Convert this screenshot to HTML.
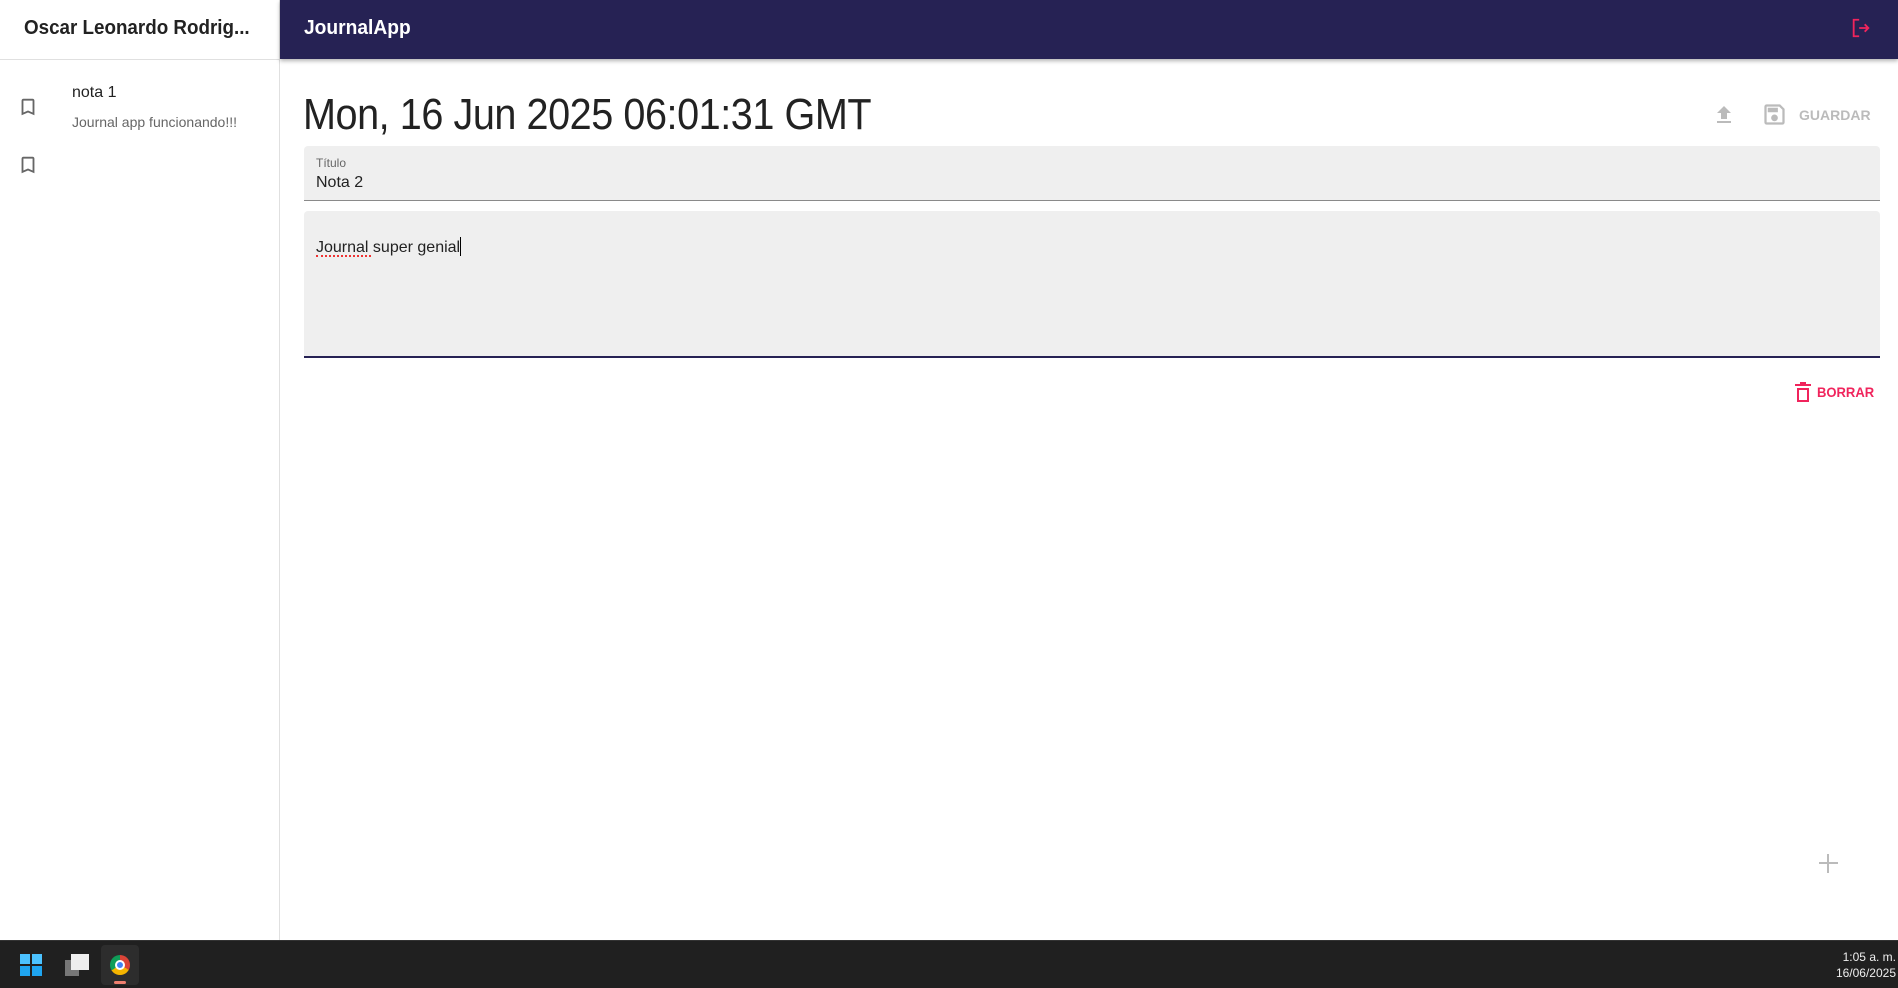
<!DOCTYPE html>
<html><head><meta charset="utf-8"><style>
*{margin:0;padding:0;box-sizing:border-box}
body{width:1898px;height:988px;overflow:hidden;background:#fff;font-family:"Liberation Sans",sans-serif;position:relative}
.abs{position:absolute}
</style></head><body>
<div class="abs" style="left:0;top:0;width:280px;height:940px;border-right:1px solid #e0e0e0;background:#fff"></div>
<div class="abs" style="left:0;top:59px;width:280px;height:1px;background:#e0e0e0"></div>
<div class="abs" style="left:24px;top:17px;font-size:20px;font-weight:bold;color:#222;transform:scaleX(0.94);transform-origin:0 0;white-space:nowrap">Oscar Leonardo Rodrig...</div>
<svg class="abs" style="left:17px;top:95px" width="22" height="24" viewBox="0 0 24 24"><path d="M17 3H7c-1.1 0-2 .9-2 2v16l7-3 7 3V5c0-1.1-.9-2-2-2zm0 15l-5-2.18L7 18V5h10v13z" fill="#666"/></svg>
<svg class="abs" style="left:17px;top:153px" width="22" height="24" viewBox="0 0 24 24"><path d="M17 3H7c-1.1 0-2 .9-2 2v16l7-3 7 3V5c0-1.1-.9-2-2-2zm0 15l-5-2.18L7 18V5h10v13z" fill="#666"/></svg>
<div class="abs" style="left:72px;top:84px;font-size:16px;color:#222">nota 1</div>
<div class="abs" style="left:72px;top:114px;font-size:14px;color:#666">Journal app funcionando!!!</div>
<div class="abs" style="left:280px;top:0;width:1618px;height:59px;background:#262254;box-shadow:0 2px 4px rgba(0,0,0,.3)"></div>
<div class="abs" style="left:304px;top:17px;font-size:20px;font-weight:bold;color:#fff;transform:scaleX(0.96);transform-origin:0 0">JournalApp</div>
<svg class="abs" style="left:1850px;top:17px" width="22" height="22" viewBox="0 0 24 24"><path d="M10 3H4v18h6" fill="none" stroke="#f0245c" stroke-width="2"/><path d="M10 12h10M16 8l4 4-4 4" fill="none" stroke="#f0245c" stroke-width="2"/></svg>
<div class="abs" style="left:303px;top:90px;font-size:44px;font-weight:300;color:#222;letter-spacing:-0.5px;transform:scaleX(0.9);transform-origin:0 0;white-space:nowrap">Mon, 16 Jun 2025 06:01:31 GMT</div>
<svg class="abs" style="left:1712px;top:103px" width="24" height="24" viewBox="0 0 24 24"><path d="M9 16h6v-6h4l-7-7-7 7h4zm-4 2h14v2H5z" fill="#bbb"/></svg>
<svg class="abs" style="left:1761px;top:101px" width="27" height="27" viewBox="0 0 24 24"><path d="M17 3H5a2 2 0 0 0-2 2v14a2 2 0 0 0 2 2h14a2 2 0 0 0 2-2V7l-4-4zm2 16H5V5h11.17L19 7.83V19zm-7-7a3 3 0 1 0 0 6 3 3 0 0 0 0-6zM6 6h9v4H6z" fill="#bbb"/></svg>
<div class="abs" style="left:1799px;top:107px;font-size:14px;font-weight:bold;color:#bbb;letter-spacing:0">GUARDAR</div>
<div class="abs" style="left:304px;top:146px;width:1576px;height:55px;background:#efefef;border-radius:4px 4px 0 0;border-bottom:1px solid #8a8a8a"></div>
<div class="abs" style="left:316px;top:156px;font-size:12px;color:#666">Título</div>
<div class="abs" style="left:316px;top:174px;font-size:16px;color:#222">Nota 2</div>
<div class="abs" style="left:304px;top:211px;width:1576px;height:147px;background:#efefef;border-radius:4px 4px 0 0;border-bottom:2px solid #262254"></div>
<div class="abs" style="left:316px;top:237px;font-size:16px;color:#222">Journal super genial<span style="display:inline-block;width:1px;height:19px;background:#000;vertical-align:-4px"></span></div>
<div class="abs" style="left:316px;top:254px;width:55px;height:3px;border-bottom:2px dotted #e33"></div>
<svg class="abs" style="left:1793px;top:381px" width="20" height="22" viewBox="0 0 20 22"><path d="M7 1h6v2h5v2H2V3h5zM4 7h12v14H4zm2 2v10h8V9z" fill="#f0245c"/></svg>
<div class="abs" style="left:1817px;top:384px;font-size:14px;font-weight:bold;color:#f0245c;transform:scaleX(0.93);transform-origin:0 0">BORRAR</div>
<div class="abs" style="left:1819px;top:862px;width:19px;height:2px;background:#bbb"></div>
<div class="abs" style="left:1827px;top:854px;width:2px;height:19px;background:#bbb"></div>
<div class="abs" style="left:0;top:940px;width:1898px;height:48px;background:#202020;border-top:1px solid #333"></div>
<div class="abs" style="left:20px;top:954px;width:10px;height:10px;background:#4cc2ff"></div>
<div class="abs" style="left:32px;top:954px;width:10px;height:10px;background:#4cc2ff"></div>
<div class="abs" style="left:20px;top:966px;width:10px;height:10px;background:#1fa5f0"></div>
<div class="abs" style="left:32px;top:966px;width:10px;height:10px;background:#1fa5f0"></div>
<div class="abs" style="left:65px;top:960px;width:14px;height:16px;background:#777"></div>
<div class="abs" style="left:71px;top:954px;width:18px;height:16px;background:#eee"></div>
<div class="abs" style="left:101px;top:945px;width:38px;height:40px;background:#2d2d2d;border-radius:4px"></div>
<div class="abs" style="left:110px;top:955px;width:20px;height:20px;border-radius:50%;background:conic-gradient(#db4437 0 33%,#f4b400 33% 66%,#0f9d58 66%)"></div>
<div class="abs" style="left:115px;top:960px;width:10px;height:10px;border-radius:50%;background:#4285f4;border:2px solid #fff"></div>
<div class="abs" style="left:114px;top:981px;width:12px;height:3px;background:#f08070;border-radius:2px"></div>
<div class="abs" style="right:2px;top:949px;font-size:12px;color:#eee;text-align:right;line-height:16px">1:05 a. m.<br>16/06/2025</div>
</body></html>
